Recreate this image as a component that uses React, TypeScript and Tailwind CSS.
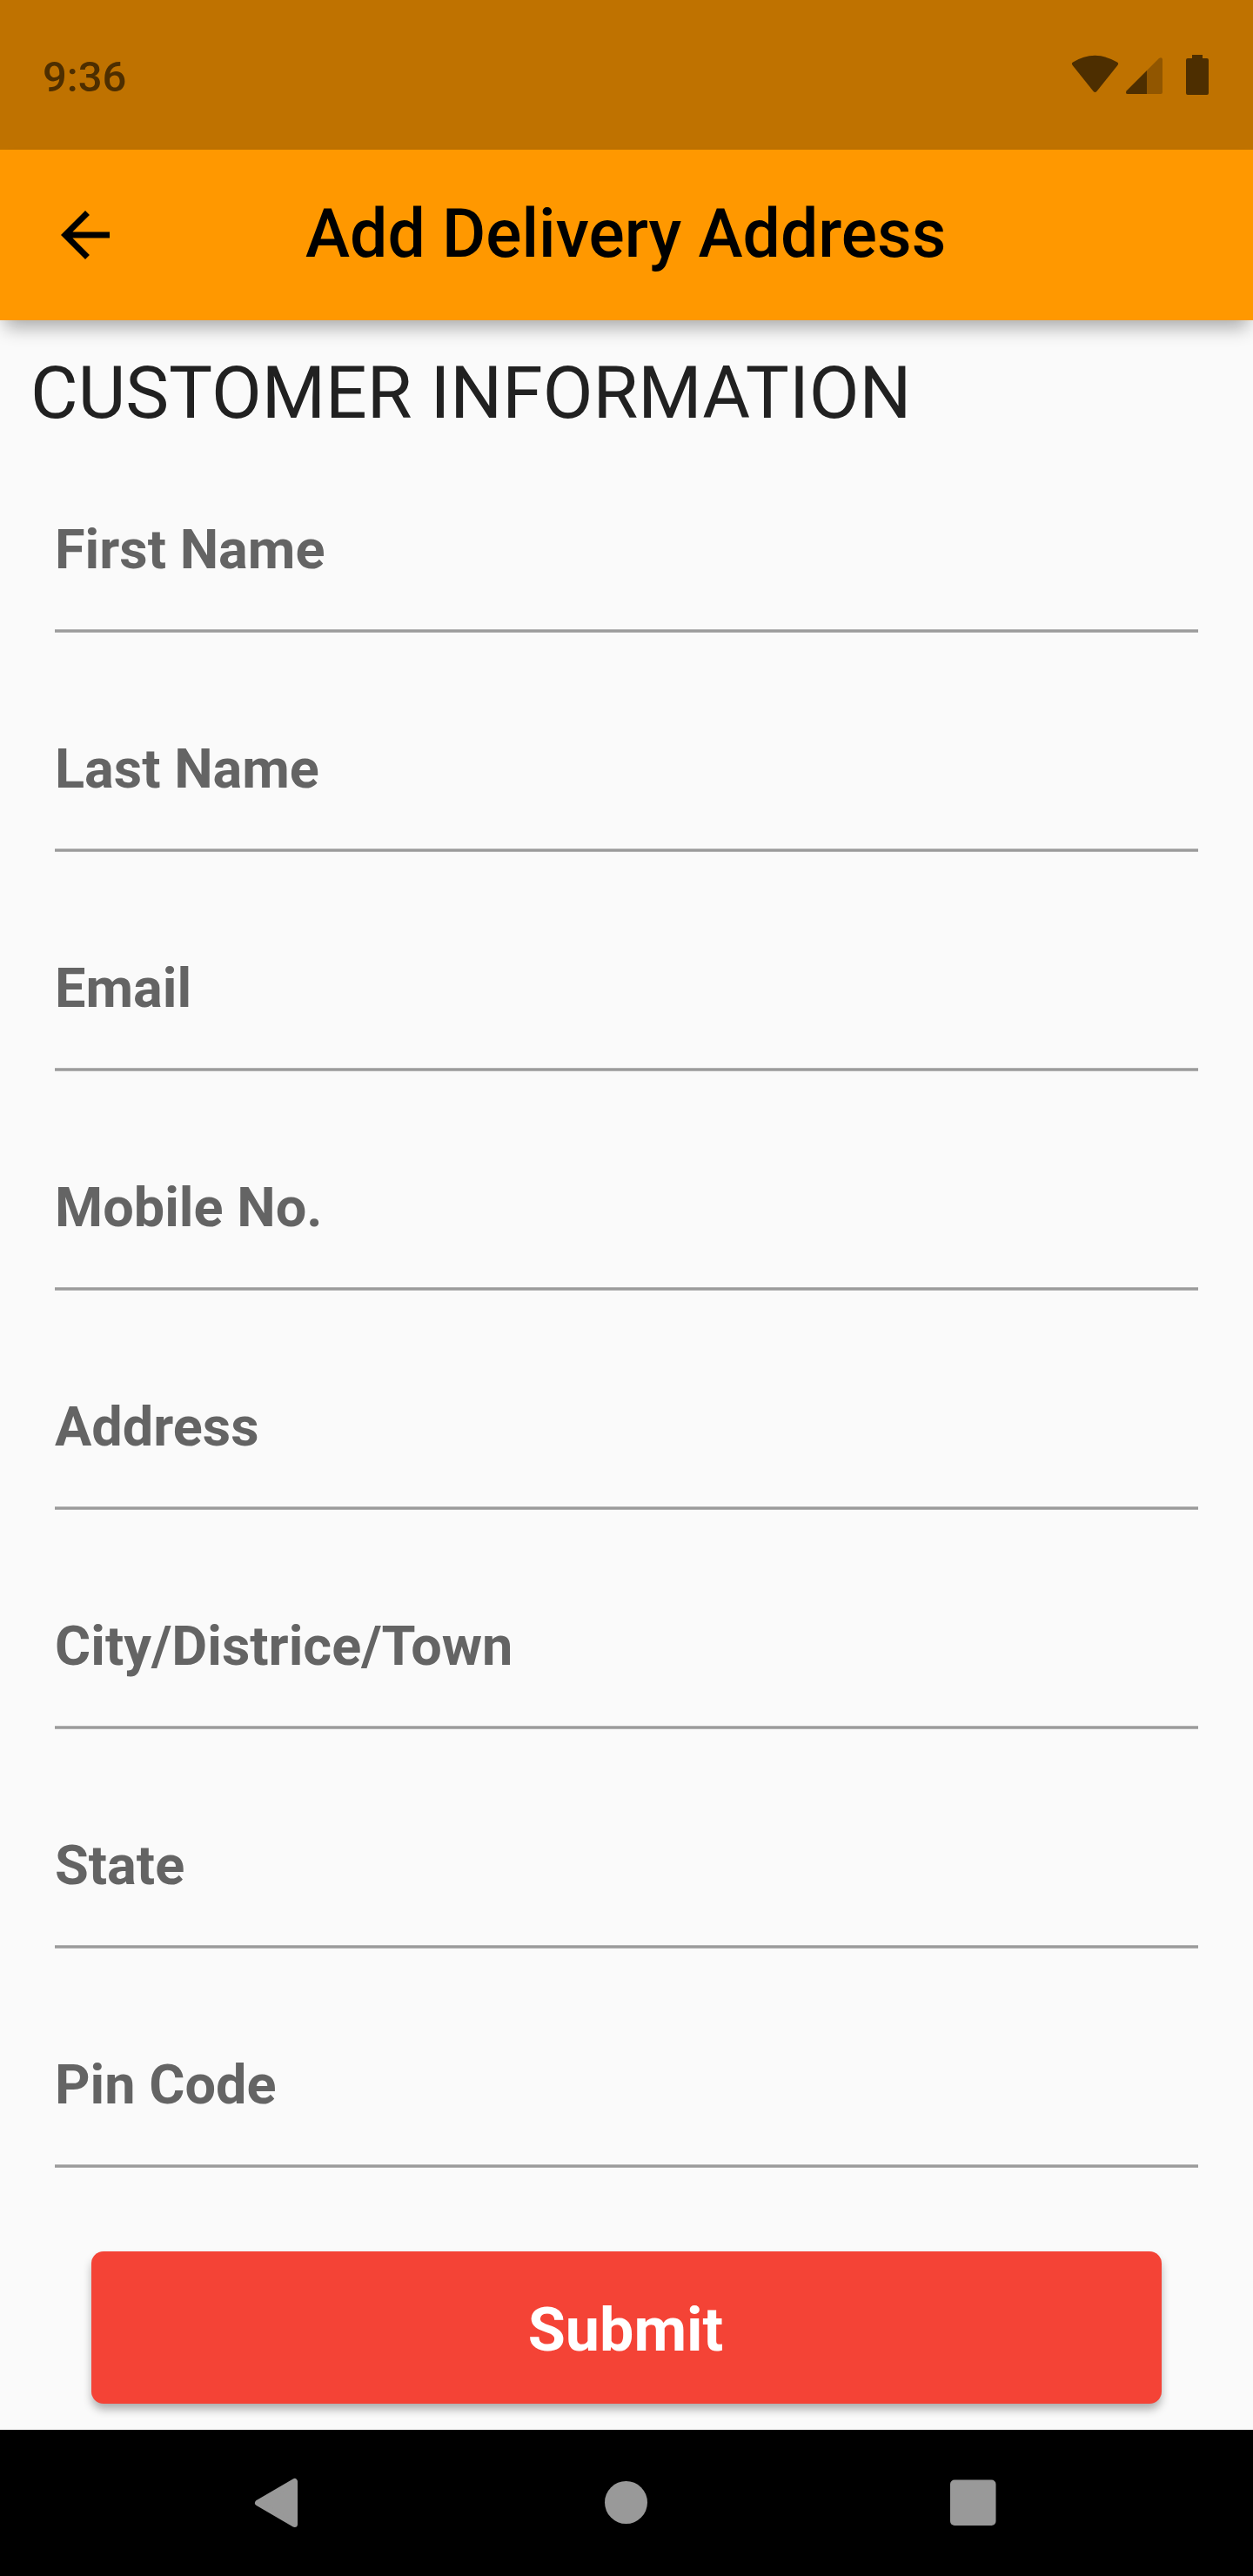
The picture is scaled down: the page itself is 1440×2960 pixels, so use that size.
const fields = [
  'First Name',
  'Last Name',
  'Email',
  'Mobile No.',
  'Address',
  'City/Districe/Town',
  'State',
  'Pin Code',
];

export default function App() {
  return (
    <div className="flex h-[2960px] w-[1440px] flex-col overflow-hidden bg-[#fafafa] font-['Roboto',sans-serif]">
      <div className="flex h-[172px] shrink-0 items-center justify-between bg-[#bf7200] pl-[49px] pr-[50px] text-[#4d2e00]">
        <span className="mt-[4px] text-[49px] font-medium leading-none">9:36</span>
        <svg width="160" height="48" viewBox="1230 62 160 48" fill="currentColor">
          <path d="M1232.6 75Q1231 73 1233 71.5Q1258 56 1284 71.5Q1286 73 1284.4 75L1260.4 105Q1258.500 107 1256.600 105Z" />
          <path d="M1318 81V108H1334Q1336 108 1336 106V68Q1335 65 1332 67Z" opacity=".4" />
          <path d="M1318 81L1294.500 104.500Q1293 108 1296 108H1318Z" />
          <path d="M1365 67H1370V63H1382V67H1387Q1389 67 1389 69V107Q1389 109 1387 109H1365Q1363 109 1363 107V69Q1363 67 1365 67Z" />
        </svg>
      </div>
      <header className="z-10 flex h-[196px] shrink-0 items-center bg-[#ff9800] shadow-[0_14px_20px_-6px_rgba(0,0,0,0.33)]">
        <svg className="ml-[56px]" width="84" height="84" viewBox="0 0 24 24">
          <path d="M20 11H7.83l5.59-5.59L12 4l-8 8 8 8 1.41-1.41L7.83 13H20v-2z" />
        </svg>
        <h1 className="mb-[2px] ml-[211px] whitespace-nowrap text-[77px] font-medium leading-none">Add Delivery Address</h1>
      </header>
      <main className="flex flex-1 flex-col">
        <h2 className="ml-[35px] mt-[42px] text-[84px] leading-[84px] text-[#212121]">CUSTOMER INFORMATION</h2>
        <form className="mx-[63px] mt-[-19px]">
          {fields.map((name) => (
            <label key={name} className="flex h-[252px] flex-col justify-end">
              <span className="mb-[59px] text-[63px] font-bold leading-[64px] text-[#646464]">{name}</span>
              <span className="h-1 border-y border-[#b2b2b2] bg-[#9b9b9b]" />
            </label>
          ))}
        </form>
        <button className="mx-[105px] mt-[96px] h-[175px] rounded-[14px] bg-[#f44336] pr-[2px] pt-[5px] text-[70px] font-bold text-white shadow-[0_7px_11px_-1px_rgba(0,0,0,0.33)]">Submit</button>
      </main>
      <nav className="h-[168px] shrink-0 bg-black">
        <svg width="1440" height="168" viewBox="0 2792 1440 168" fill="#999">
          <path d="M296.500 2876L338.500 2851.500V2900.500Z" stroke="#999" strokeWidth="7" strokeLinejoin="round" />
          <circle cx="719.5" cy="2875.500" r="24.500" />
          <rect x="1092" y="2849.500" width="52.500" height="52.500" rx="5" />
        </svg>
      </nav>
    </div>
  );
}
